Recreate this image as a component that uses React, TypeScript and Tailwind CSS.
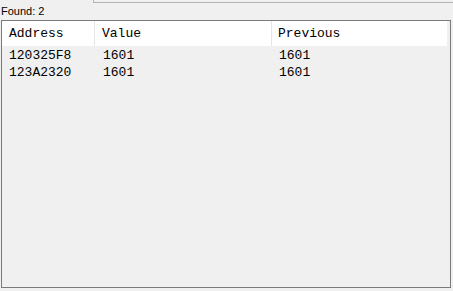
const rows = [
  { address: '120325F8', value: '1601', previous: '1601' },
  { address: '123A2320', value: '1601', previous: '1601' },
];

const mono = { fontFamily: '"Liberation Mono", "Courier New", monospace' };

export default function App() {
  return (
    <div className="flex h-[291px] w-[453px] flex-col bg-[#f0f0f0]">
      {/* edge of the panel above */}
      <div className="flex h-[3px]">
        <div className="ml-[93px] flex-1 border-b border-l border-[#b4b4b4]" />
      </div>

      <div
        className="h-[17px] pl-[1px] pt-[1px] text-[11px] leading-[14px] text-black"
        style={{ fontFamily: '"Liberation Sans", Tahoma, sans-serif' }}
      >
        Found: 2
      </div>

      <div className="mx-[1px] h-[268px] w-[450px] border border-[#7a7a7a] bg-[#f0f0f0]">
        <div
          className="flex h-[25px] w-[445px] items-center bg-white text-[13px] text-black"
          style={mono}
        >
          <div className="flex h-full w-[93px] items-center border-r border-[#e5e5e5] pl-[7px]">
            Address
          </div>
          <div className="flex h-full w-[177px] items-center border-r border-[#e5e5e5] pl-[7px]">
            Value
          </div>
          <div className="flex h-full flex-1 items-center pl-[6px]">Previous</div>
        </div>

        <div className="pt-[1px] text-[13px] text-black" style={mono}>
          {rows.map((row) => (
            <div key={row.address} className="flex h-[17px] items-center">
              <div className="w-[94px] pl-[7px]">{row.address}</div>
              <div className="w-[177px] pl-[7px]">{row.value}</div>
              <div className="flex-1 pl-[6px]">{row.previous}</div>
            </div>
          ))}
        </div>
      </div>
    </div>
  );
}
